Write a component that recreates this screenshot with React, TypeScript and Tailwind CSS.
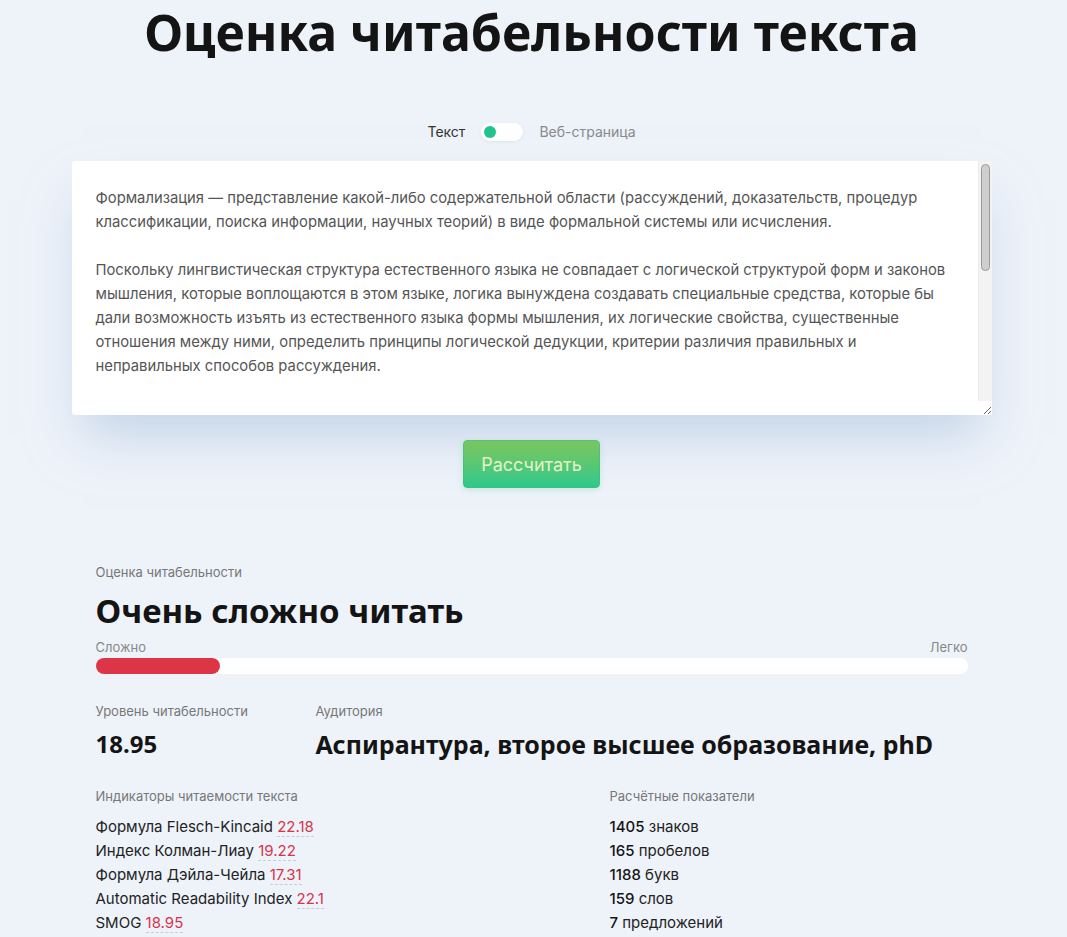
import { useState } from 'react'

const sampleText =
  'Формализация — представление какой-либо содержательной области (рассуждений, доказательств, процедур классификации, поиска информации, научных теорий) в виде формальной системы или исчисления.\n\n' +
  'Поскольку лингвистическая структура естественного языка не совпадает с логической структурой форм и законов мышления, которые воплощаются в этом языке, логика вынуждена создавать специальные средства, которые бы дали возможность изъять из естественного языка формы мышления, их логические свойства, существенные отношения между ними, определить принципы логической дедукции, критерии различия правильных и неправильных способов рассуждения.\n\n\n\n\n\n\n\n\n\n\n\n\n\n\n\n'

const indicators = [
  { label: 'Формула Flesch-Kincaid', value: '22.18' },
  { label: 'Индекс Колман-Лиау', value: '19.22' },
  { label: 'Формула Дэйла-Чейла', value: '17.31' },
  { label: 'Automatic Readability Index', value: '22.1' },
  { label: 'SMOG', value: '18.95' },
]

const stats = [
  { n: '1405', word: 'знаков' },
  { n: '165', word: 'пробелов' },
  { n: '1188', word: 'букв' },
  { n: '159', word: 'слов' },
  { n: '7', word: 'предложений' },
]

const heading = { fontFamily: '"Noto Sans", "DejaVu Sans", sans-serif' }
const body = { fontFamily: 'Inter, "Noto Sans", sans-serif' }

export default function App() {
  const [mode, setMode] = useState<'text' | 'web'>('text')
  const [text, setText] = useState(sampleText)

  return (
    <div className="min-h-screen bg-[#eef3fa] text-[#1a1a1a]" style={body}>
      <div className="mx-auto w-[920px] -translate-x-[2px]">
        <h1 className="pt-[2px] text-center text-[50px] font-bold leading-[60px] text-[#141414]" style={heading}>
          Оценка читабельности текста
        </h1>

        {/* mode switch */}
        <div className="mt-[61px] flex items-center justify-center gap-4 text-[14px] leading-[18px]">
          <span className="text-[#333]">Текст</span>
          <button
            onClick={() => setMode(mode === 'text' ? 'web' : 'text')}
            className="flex h-[18px] w-[42px] items-center rounded-full bg-white px-[3px] shadow-[0_1px_3px_rgba(120,140,170,0.15)]"
          >
            <span className={`h-3 w-3 rounded-full bg-[#22c38e] ${mode === 'web' ? 'ml-auto' : ''}`} />
          </button>
          <span className="text-[#8a8a8a]">Веб-страница</span>
        </div>

        <div className="relative mt-[20px]">
          <textarea
            value={text}
            onChange={(e) => setText(e.target.value)}
            className="block h-[254px] w-[920px] resize overflow-y-scroll rounded-[3px] bg-white pl-6 pr-[37px] pt-[25px] text-[14.8px] leading-[24px] text-[#555] shadow-[0_30px_50px_-10px_rgba(160,185,215,0.55)] outline-none"
            style={body}
          />
          {/* scrollbar look */}
          <div aria-hidden className="pointer-events-none absolute right-0 top-0 h-[240px] w-[14px] rounded-tr-[3px] border-l border-[#ececec] bg-[#f3f3f3] pt-[3px] pl-[2px]">
            <div className="h-[107px] w-[9px] rounded-full border border-[#9a9a9a] bg-[#cfcfcf]" />
          </div>
        </div>

        <div className="mt-[25px] flex justify-center">
          <button className="h-[48px] w-[137px] rounded-[4px] border border-[#3cc477] bg-gradient-to-b from-[#6fc93c] to-[#2ac98f] text-[18px] text-[#eaf7c8] shadow-[0_2px_6px_rgba(60,180,110,0.2)]">
            Рассчитать
          </button>
        </div>

        {/* results */}
        <div className="mt-[75px] px-6">
          <div className="text-[13px] leading-[18px] text-[#777]">Оценка читабельности</div>
          <div className="mt-[10px] text-[33px] font-bold leading-[40px] text-[#141414]" style={heading}>
            Очень сложно читать
          </div>
          <div className="mt-[7px] flex justify-between text-[13px] leading-[18px] text-[#888]">
            <span>Сложно</span>
            <span>Легко</span>
          </div>
          <div className="mt-[2px] h-4 w-full rounded-full bg-white">
            <div className="h-4 rounded-full bg-[#dc3545]" style={{ width: `${(124 / 872) * 100}%` }} />
          </div>

          <div className="mt-[28px] flex">
            <div className="w-[220px]">
              <div className="text-[13px] leading-[18px] text-[#777]">Уровень читабельности</div>
              <div className="mt-[9px] text-[24px] font-bold leading-[30px] text-[#141414]" style={heading}>
                18.95
              </div>
            </div>
            <div>
              <div className="text-[13px] leading-[18px] text-[#777]">Аудитория</div>
              <div className="mt-[9px] text-[25px] font-bold leading-[30px] text-[#141414]" style={heading}>
                Аспирантура, второе высшее образование, phD
              </div>
            </div>
          </div>

          <div className="mt-[28px] flex pb-10">
            <div className="w-[514px]">
              <div className="text-[13px] leading-[18px] text-[#777]">Индикаторы читаемости текста</div>
              <ul className="mt-[10px] text-[15px] leading-[24px] text-[#222]">
                {indicators.map((r) => (
                  <li key={r.label}>
                    {r.label}{' '}
                    <span className="border-b border-dashed border-[#c9ccd3] text-[#d7334a]">{r.value}</span>
                  </li>
                ))}
              </ul>
            </div>
            <div>
              <div className="text-[13px] leading-[18px] text-[#777]">Расчётные показатели</div>
              <ul className="mt-[10px] text-[15px] leading-[24px] text-[#222]">
                {stats.map((s) => (
                  <li key={s.word}>
                    <span className="font-medium text-[#141414]">{s.n}</span> {s.word}
                  </li>
                ))}
              </ul>
            </div>
          </div>
        </div>
      </div>
    </div>
  )
}
